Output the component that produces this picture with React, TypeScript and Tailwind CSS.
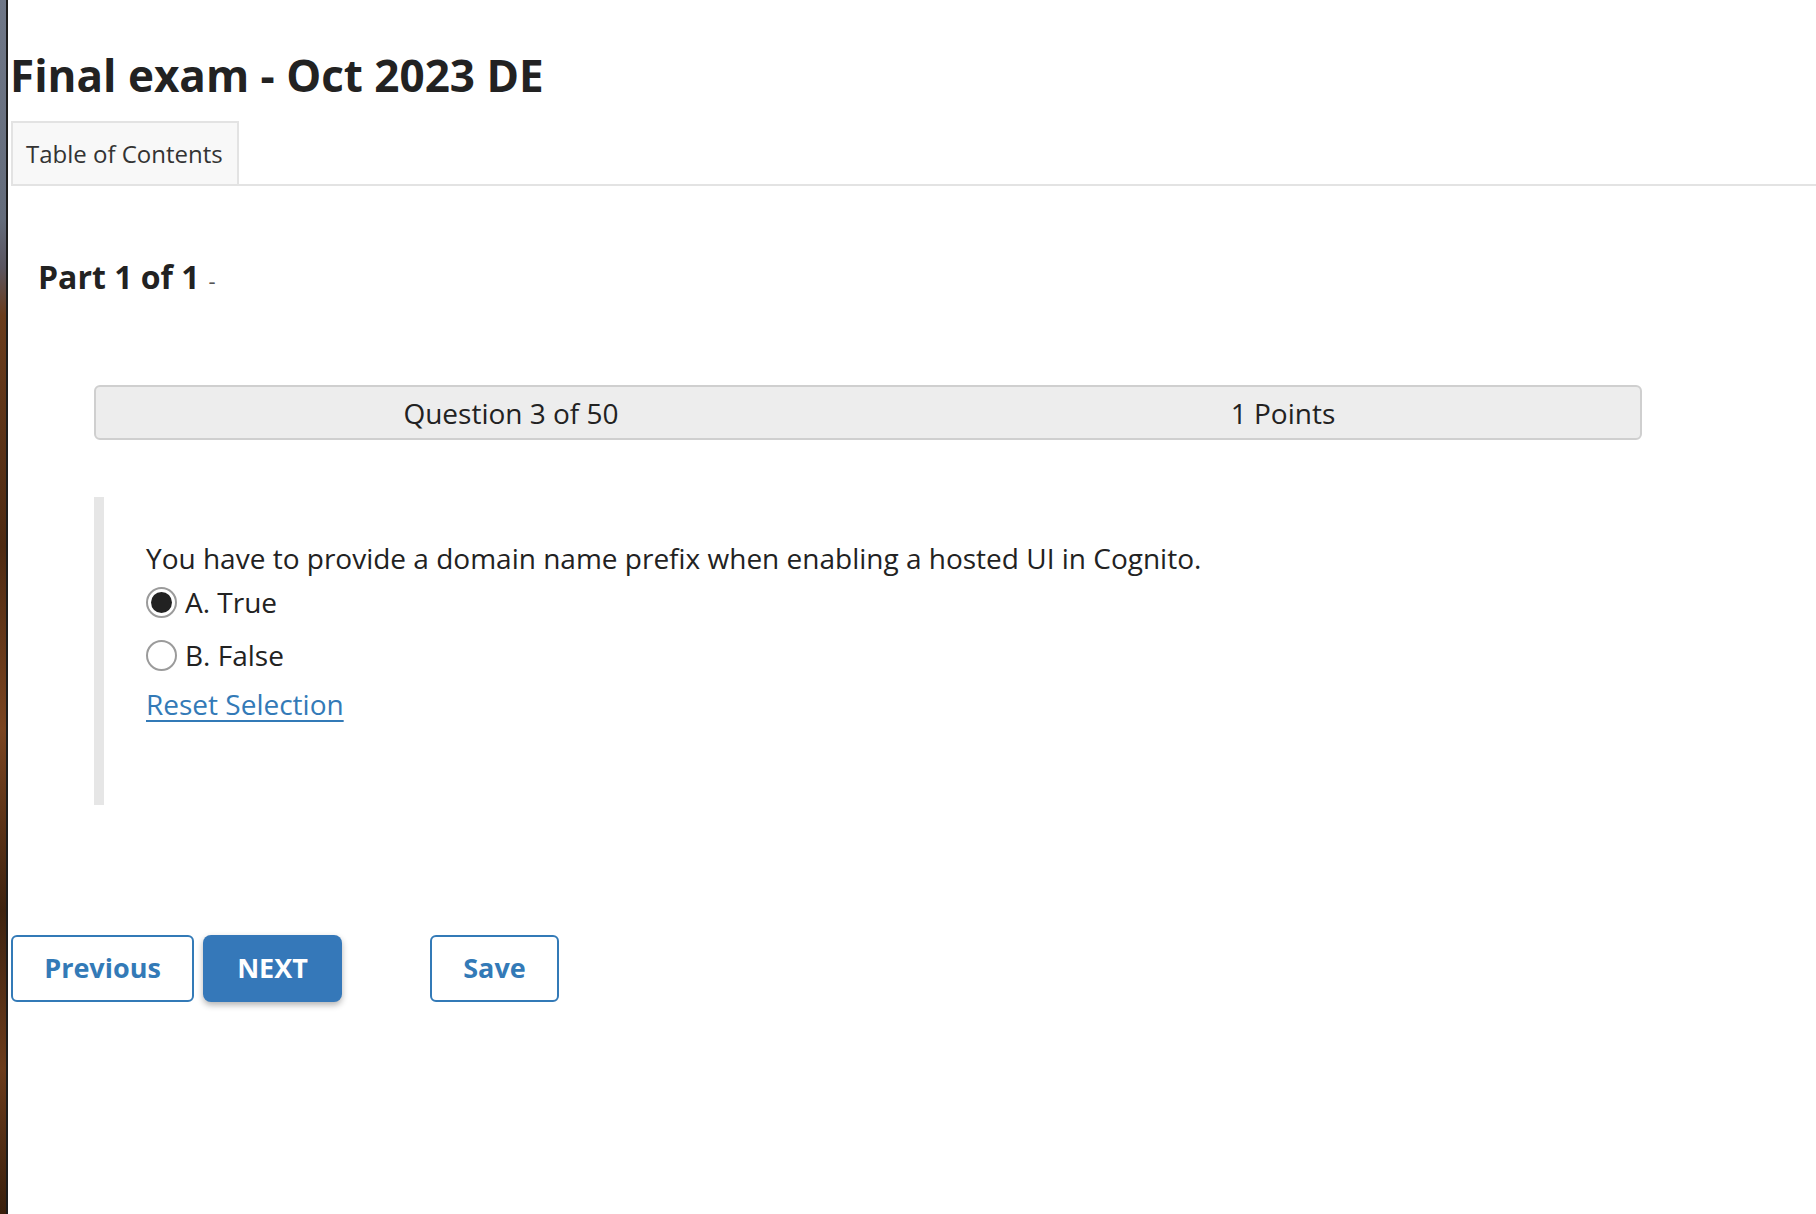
import { useState } from "react"

interface OptionData {
    id: string,
    label: string
}

const options: OptionData[] = [
    { id: "a", label: "A. True" },
    { id: "b", label: "B. False" },
]

function Radio({ checked }: { checked: boolean }) {
    return (
        <span className="flex h-[31px] w-[31px] shrink-0 items-center justify-center rounded-full border-2 border-[#9b9b9b] bg-white">
            {checked && <span className="h-[21px] w-[21px] rounded-full bg-[#222]" />}
        </span>
    )
}

function QuestionBlock() {
    const [selected, setSelected] = useState<string | null>("a")

    return (
        <div className="ml-[86px] mt-[57px] flex h-[308px]">
            <div className="w-[10px] bg-[#e6e6e6]" />
            <div className="pl-[42px] pt-[43px]">
                <p className="text-[28px] leading-[36px] text-[#222]">
                    You have to provide a domain name prefix when enabling a hosted UI in Cognito.
                </p>
                <div className="mt-[6px] flex flex-col gap-[13px]">
                    {options.map((opt) => (
                        <label key={opt.id} className="flex h-[40px] cursor-pointer items-center gap-[8px]" onClick={() => setSelected(opt.id)}>
                            <Radio checked={selected === opt.id} />
                            <span className="text-[28px] leading-[36px] text-[#222]">{opt.label}</span>
                        </label>
                    ))}
                </div>
                <a href="#" onClick={(e) => { e.preventDefault(); setSelected(null) }}
                    className="mt-[11px] block text-[28px] leading-[36px] text-[#337ab7] underline underline-offset-[5px] decoration-[2px]">
                    Reset Selection
                </a>
            </div>
        </div>
    )
}

export default function App() {
    return (
        <div className="flex min-h-[1214px] w-full bg-white font-['Open_Sans',sans-serif]">
            <div className="w-[8px] shrink-0 border-r-2 border-[#1c1c1c] bg-[linear-gradient(180deg,#6f7787_0%,#646c7b_18%,#5a5560_22%,#6a3c1c_26%,#4e2a12_45%,#7a4420_60%,#3f230f_75%,#6b3b1b_88%,#3a200d_100%)]" />
            <div className="flex-1">
                <h1 className="ml-[2px] mt-[48px] text-[44px] font-bold leading-[55px] text-[#222]">
                    Final exam - Oct 2023 DE
                </h1>
                <div className="mt-[18px] flex">
                    <div className="ml-[3px] w-[228px] border-2 border-[#e3e3e3] bg-[#f8f8f8] pl-[13px] py-[14px] text-[24px] leading-[33px] text-[#333]">
                        Table of Contents
                    </div>
                    <div className="flex-1 border-b-2 border-[#e3e3e3]" />
                </div>

                <div className="ml-[30px] mt-[73px] flex h-[36px] items-baseline gap-[9px] leading-[36px]">
                    <h2 className="text-[32px] font-bold leading-[36px] text-[#222]">Part 1 of 1</h2>
                    <span className="text-[22px] leading-[36px] text-[#555]">-</span>
                </div>

                <div className="ml-[86px] mt-[90px] grid h-[55px] w-[1548px] grid-cols-2 rounded-[6px] border-2 border-[#cfcfcf] bg-[#ededed] text-[28px] text-[#222]">
                    <div className="flex items-center justify-center pl-[58px]">Question 3 of 50</div>
                    <div className="flex items-center justify-center pl-[58px]">1 Points</div>
                </div>

                <QuestionBlock />

                <div className="ml-[3px] mt-[130px] flex items-center">
                    <button className="h-[67px] w-[183px] rounded-[6px] border-2 border-[#337ab7] bg-white text-[27px] font-bold text-[#337ab7]">
                        Previous
                    </button>
                    <button className="ml-[9px] h-[67px] w-[139px] rounded-[8px] bg-[#3578b9] text-[27px] font-bold text-white shadow-[0_3px_6px_rgba(0,0,0,0.3)]">
                        NEXT
                    </button>
                    <button className="ml-[88px] h-[67px] w-[129px] rounded-[6px] border-2 border-[#337ab7] bg-white text-[27px] font-bold text-[#337ab7]">
                        Save
                    </button>
                </div>
            </div>
        </div>
    )
}
